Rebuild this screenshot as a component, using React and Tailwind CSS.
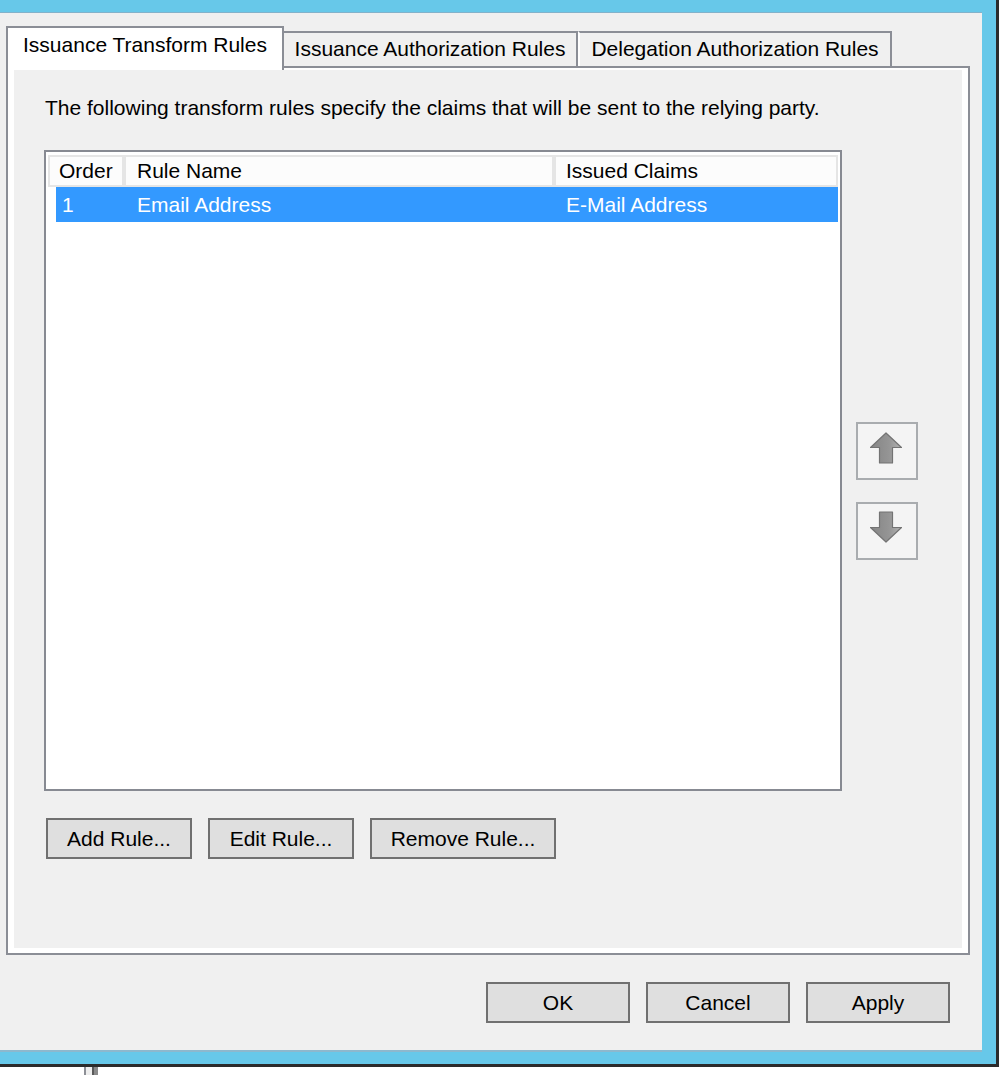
import React from "react";

function Arrow({ down }) {
  const id = down ? "gradDown" : "gradUp";
  const d = down
    ? "M16 31 L31.5 16.5 L22.5 16.5 L22.5 1 L9.5 1 L9.5 16.5 L0.5 16.5 Z"
    : "M16 1 L31.5 15.5 L22.5 15.5 L22.5 31 L9.5 31 L9.5 15.5 L0.5 15.5 Z";
  return (
    <svg width="32" height="32" viewBox="0 0 32 32">
      <defs>
        <linearGradient id={id} x1="0" y1="0" x2="1" y2="0">
          <stop offset="0" stopColor="#858585" />
          <stop offset="0.6" stopColor="#959595" />
          <stop offset="1" stopColor="#b2b2b2" />
        </linearGradient>
      </defs>
      <path d={d} fill={`url(#${id})`} stroke="#737373" strokeWidth="1.2" strokeLinejoin="round" />
    </svg>
  );
}

function Btn({ w, children }) {
  return (
    <div
      className={`${w} h-[41px] border-2 border-[#707070] bg-[#dfdfdf] flex items-center justify-center whitespace-nowrap`}
    >
      {children}
    </div>
  );
}

export default function App() {
  return (
    <div className="w-[999px] h-[1075px] bg-white flex flex-col overflow-hidden font-[family-name:'Liberation_Sans',Arial,sans-serif] text-[21px] leading-[26px] text-black whitespace-nowrap">
      <div className="h-[1067px] w-[999px] shrink-0 bg-[#67c8e9] border-r-[3px] border-b-[3px] border-[#2b2b2b] pt-[12px] pr-[14px] pb-[12px]">
        <div className="h-full bg-[#f0f0f0] border-t border-b-2 border-t-[#83b2ca] border-b-[#8db8cd] flex flex-col pt-[13px] pb-[27px]">
          {/* Tabs */}
          <div className="flex items-end h-[40px] pl-[6px] relative z-10 shrink-0">
            <div className="h-[44px] w-[278px] -mb-[4px] bg-white border-2 border-b-0 border-[#8b8e96] flex justify-center pt-[4px]">
              Issuance Transform Rules
            </div>
            <div className="h-[35px] w-[294px] border-t-2 border-r-2 border-[#8b8e96] flex justify-center pt-[3px]">
              Issuance Authorization Rules
            </div>
            <div className="h-[35px] w-[314px] border-t-2 border-r-2 border-l-2 border-t-[#8b8e96] border-r-[#8b8e96] border-l-white flex justify-center pt-[3px]">
              Delegation Authorization Rules
            </div>
          </div>

          {/* Panel */}
          <div className="h-[889px] w-[964px] ml-[6px] shrink-0 border-2 border-[#8b8e96] bg-white pt-[2px] px-[6px] pb-[5px]">
            <div className="h-full bg-[#f0f0f0] pl-[30px] pt-[25px] flex flex-col">
              <p className="h-[24px] pl-[1px]">
                The following transform rules specify the claims that will be sent to the relying party.
              </p>

              <div className="flex mt-[31px]">
                {/* List */}
                <div className="w-[798px] h-[641px] border-2 border-[#878a92] bg-white pt-[3px] px-[2px]">
                  <div className="flex gap-[4px] bg-[#e5e5e5] p-[2px] h-[32px]">
                    <div className="w-[72px] bg-[#fcfcfc] flex items-center pl-[9px]">Order</div>
                    <div className="w-[426px] bg-[#fcfcfc] flex items-center pl-[11px]">Rule Name</div>
                    <div className="w-[280px] bg-[#fcfcfc] flex items-center pl-[10px]">Issued Claims</div>
                  </div>
                  <div className="ml-[8px] h-[35px] bg-[#3399ff] text-white flex items-center">
                    <div className="w-[70px] pl-[6px]">1</div>
                    <div className="w-[430px] pl-[11px]">Email Address</div>
                    <div className="flex-1 pl-[10px]">E-Mail Address</div>
                  </div>
                </div>

                {/* Move buttons */}
                <div className="ml-[14px] mt-[272px] flex flex-col gap-[22px]">
                  <div className="w-[62px] h-[58px] border-2 border-[#a9acaf] bg-[#f4f4f4] flex justify-center items-start pt-[8px] pr-[3px]">
                    <Arrow />
                  </div>
                  <div className="w-[62px] h-[58px] border-2 border-[#a9acaf] bg-[#f4f4f4] flex justify-center items-start pt-[7px] pr-[3px]">
                    <Arrow down />
                  </div>
                </div>
              </div>

              <div className="flex gap-[16px] mt-[27px] pl-[2px]">
                <Btn w="w-[146px]">Add Rule...</Btn>
                <Btn w="w-[146px]">Edit Rule...</Btn>
                <Btn w="w-[186px]">Remove Rule...</Btn>
              </div>
            </div>
          </div>

          {/* Dialog buttons */}
          <div className="flex justify-end gap-[16px] pr-[32px] mt-[27px] shrink-0">
            <Btn w="w-[144px]">OK</Btn>
            <Btn w="w-[144px]">Cancel</Btn>
            <Btn w="w-[144px]">Apply</Btn>
          </div>
        </div>
      </div>

      {/* Below window */}
      <div className="flex h-[8px] pl-[84px] shrink-0">
        <div className="w-[2px] bg-[#8d8f96]" />
        <div className="w-[6px] bg-[#eeeeee]" />
        <div className="w-[2px] bg-[#5a5a5a]" />
        <div className="w-[4px] bg-[#8a8a8a]" />
      </div>
    </div>
  );
}
